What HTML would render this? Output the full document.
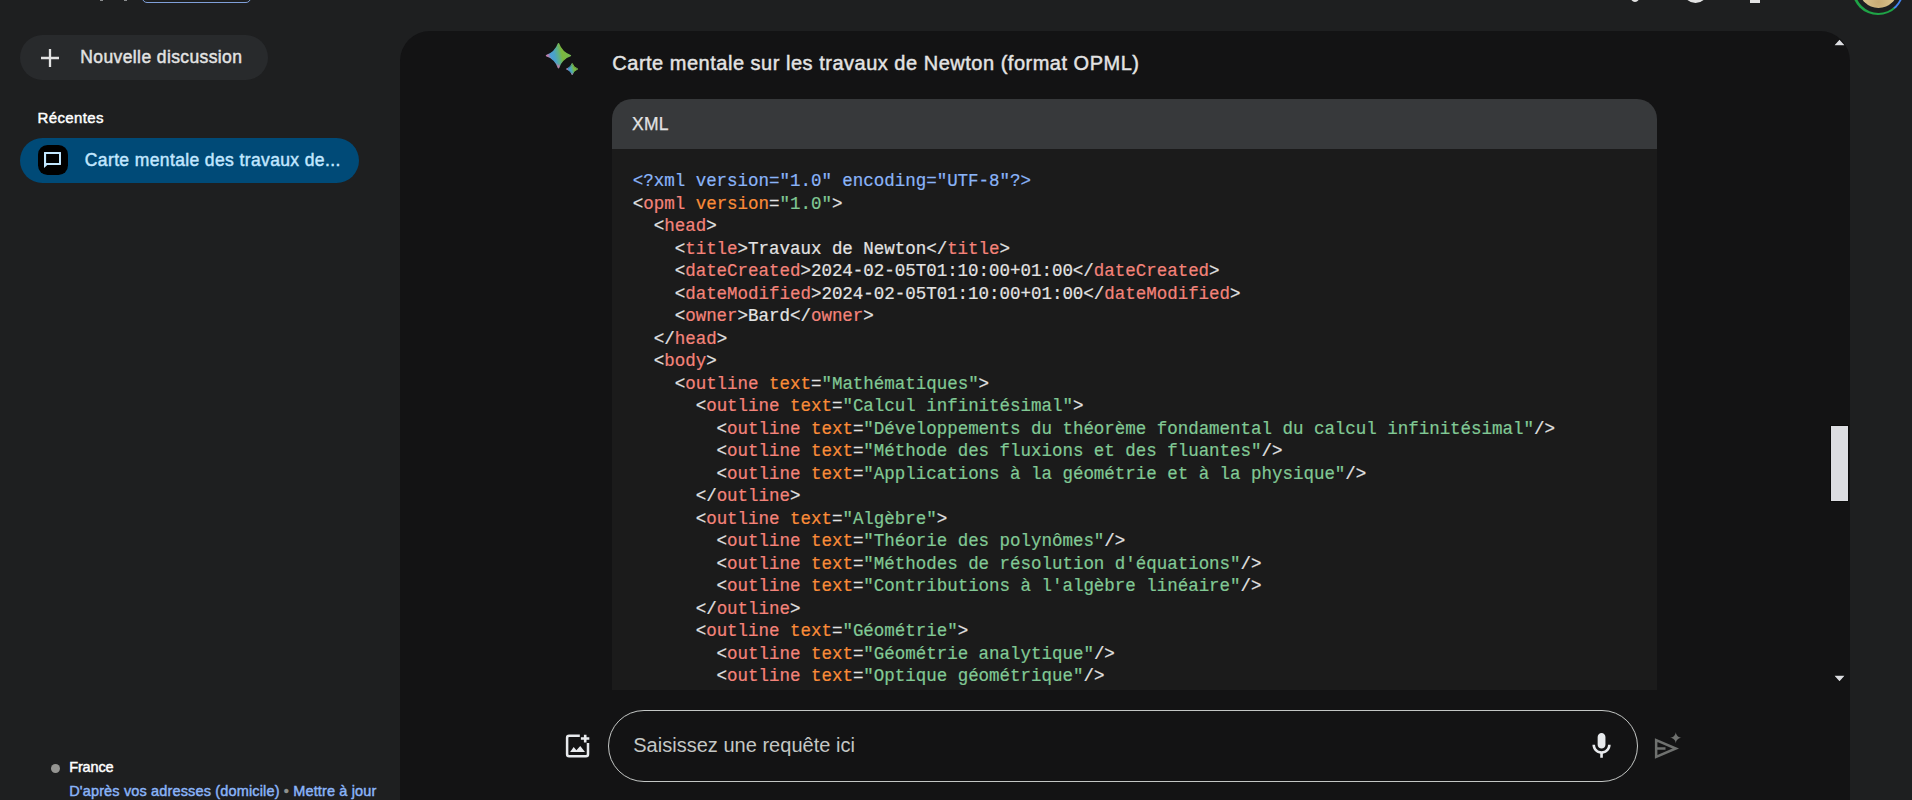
<!DOCTYPE html>
<html lang="fr">
<head>
<meta charset="utf-8">
<title>Bard</title>
<style>
*{box-sizing:border-box;margin:0;padding:0}
html,body{width:1912px;height:800px;overflow:hidden;background:#1e1f20}
body{position:relative;font-family:"Liberation Sans",sans-serif;color:#e3e3e3;-webkit-font-smoothing:antialiased}
.abs{position:absolute}
.t{position:absolute;white-space:nowrap;line-height:1}
/* top strip remnants */
#modebox{left:142px;top:-30px;width:108.8px;height:32.7px;border:1.6px solid #7f9fd8;border-radius:5px}
/* sidebar */
#newchat{left:20px;top:35px;width:248px;height:45px;border-radius:22.5px;background:#282a2c}
#sel{left:20px;top:138px;width:339px;height:45px;border-radius:22.5px;background:#004a77}
#selicon{left:38px;top:145px;width:29.8px;height:29.8px;border-radius:9.5px;background:#000}
/* main panel */
#panel{left:400px;top:31px;width:1450px;height:800px;border-radius:30px 30px 0 0;background:#131314}
#codehead{left:612px;top:98.8px;width:1045px;height:50.2px;border-radius:20px 20px 0 0;background:#37393b}
#codebody{left:612px;top:149px;width:1045px;height:540.6px;background:#1b1b1b}
pre{position:absolute;left:632.8px;top:170.1px;font-family:"Liberation Mono",monospace;font-size:17.5px;letter-spacing:-0.024px;line-height:22.5px;color:#e3e3e3;white-space:pre;-webkit-text-stroke:0.2px currentColor}
.m{color:#8ab4f8}.n{color:#f4837a}.a{color:#fa8c38}.s{color:#81c995}
#input{left:607.6px;top:709.8px;width:1030.8px;height:72.2px;border-radius:36.1px;border:1.25px solid #c4c7c5}
#sbthumb{left:1831px;top:426px;width:17px;height:75px;background:#dcdde1;box-shadow:0 0 0 1px #0b0b0b}
.md{-webkit-text-stroke:0.45px currentColor}
</style>
</head>
<body>
<!-- top strip -->
<div class="abs" id="modebox"></div>
<div class="abs" style="left:100px;top:-1px;width:3px;height:2px;background:#8a8c8e"></div>
<div class="abs" style="left:124px;top:-1px;width:3px;height:2px;background:#8a8c8e"></div>

<!-- sidebar -->
<div class="abs" id="newchat"></div>
<svg class="abs" style="left:40px;top:48px" width="20" height="20" viewBox="0 0 20 20"><path d="M10 1v18M1 10h18" stroke="#e3e3e3" stroke-width="2.3" fill="none"/></svg>
<div class="t md" id="t_new" style="left:80.3px;top:48.6px;font-size:17.5px;letter-spacing:0.39px;color:#e3e3e3">Nouvelle discussion</div>
<div class="t md" id="t_rec" style="left:37.6px;top:109.9px;font-size:15px;letter-spacing:0.36px;color:#fff">Récentes</div>
<div class="abs" id="sel"></div>
<div class="abs" id="selicon"></div>
<svg class="abs" style="left:40px;top:148px" width="26" height="24" viewBox="40 148 26 24"><path fill="#c2e7ff" fill-rule="evenodd" d="M44.400 151.900H60.600Q61 151.900 61 152.300V164.600Q61 165 60.600 165H47.300L44 168.100V152.300Q44 151.900 44.400 151.900ZM46.100 154V163H59V154Z"/></svg>
<div class="t md" id="t_sel" style="left:84.8px;top:152.2px;font-size:17.5px;letter-spacing:0.378px;color:#c2e7ff">Carte mentale des travaux de...</div>
<div class="abs" style="left:50.9px;top:763.7px;width:9.5px;height:9.5px;border-radius:50%;background:#959592"></div>
<div class="t md" id="t_fr" style="left:69.2px;top:759.6px;font-size:14.5px;letter-spacing:-0.15px;color:#fff">France</div>
<div class="t md" id="t_loc" style="left:69.2px;top:783.5px;font-size:14.5px;letter-spacing:0.148px;color:#8ab4f8">D'après vos adresses (domicile) <span style="color:#8e918f">•</span> Mettre à jour</div>

<!-- main panel -->
<div class="abs" id="panel"></div>
<div class="t md" id="t_title" style="left:612.3px;top:53.4px;font-size:20px;letter-spacing:0.51px;color:#e3e3e3">Carte mentale sur les travaux de Newton (format OPML)</div>
<div class="abs" id="codehead"></div>
<div class="t" id="t_xml" style="left:632px;top:116.1px;font-size:17.5px;letter-spacing:0.3px;color:#e3e3e3;-webkit-text-stroke:0.25px currentColor">XML</div>
<div class="abs" id="codebody"></div>
<pre id="code"><span class="m">&lt;?xml version="1.0" encoding="UTF-8"?&gt;</span>
&lt;<span class="n">opml</span> <span class="a">version</span>=<span class="s">"1.0"</span>&gt;
  &lt;<span class="n">head</span>&gt;
    &lt;<span class="n">title</span>&gt;Travaux de Newton&lt;/<span class="n">title</span>&gt;
    &lt;<span class="n">dateCreated</span>&gt;2024-02-05T01:10:00+01:00&lt;/<span class="n">dateCreated</span>&gt;
    &lt;<span class="n">dateModified</span>&gt;2024-02-05T01:10:00+01:00&lt;/<span class="n">dateModified</span>&gt;
    &lt;<span class="n">owner</span>&gt;Bard&lt;/<span class="n">owner</span>&gt;
  &lt;/<span class="n">head</span>&gt;
  &lt;<span class="n">body</span>&gt;
    &lt;<span class="n">outline</span> <span class="a">text</span>=<span class="s">"Mathématiques"</span>&gt;
      &lt;<span class="n">outline</span> <span class="a">text</span>=<span class="s">"Calcul infinitésimal"</span>&gt;
        &lt;<span class="n">outline</span> <span class="a">text</span>=<span class="s">"Développements du théorème fondamental du calcul infinitésimal"</span>/&gt;
        &lt;<span class="n">outline</span> <span class="a">text</span>=<span class="s">"Méthode des fluxions et des fluantes"</span>/&gt;
        &lt;<span class="n">outline</span> <span class="a">text</span>=<span class="s">"Applications à la géométrie et à la physique"</span>/&gt;
      &lt;/<span class="n">outline</span>&gt;
      &lt;<span class="n">outline</span> <span class="a">text</span>=<span class="s">"Algèbre"</span>&gt;
        &lt;<span class="n">outline</span> <span class="a">text</span>=<span class="s">"Théorie des polynômes"</span>/&gt;
        &lt;<span class="n">outline</span> <span class="a">text</span>=<span class="s">"Méthodes de résolution d'équations"</span>/&gt;
        &lt;<span class="n">outline</span> <span class="a">text</span>=<span class="s">"Contributions à l'algèbre linéaire"</span>/&gt;
      &lt;/<span class="n">outline</span>&gt;
      &lt;<span class="n">outline</span> <span class="a">text</span>=<span class="s">"Géométrie"</span>&gt;
        &lt;<span class="n">outline</span> <span class="a">text</span>=<span class="s">"Géométrie analytique"</span>/&gt;
        &lt;<span class="n">outline</span> <span class="a">text</span>=<span class="s">"Optique géométrique"</span>/&gt;</pre>

<!-- input -->
<div class="abs" id="input"></div>
<div class="t" id="t_ph" style="left:633.2px;top:735px;font-size:20px;letter-spacing:0.02px;color:#c4c7c5">Saisissez une requête ici</div>


<!-- sparkle -->
<svg class="abs" style="left:540px;top:38px" width="44" height="44" viewBox="540 38 44 44">
<defs><linearGradient id="g1" gradientUnits="userSpaceOnUse" x1="546.81" y1="58.32" x2="570.19" y2="52.88"><stop offset="0.05" stop-color="#7f92cc"/><stop offset="0.18" stop-color="#4a9ed6"/><stop offset="0.34" stop-color="#4aa2c8"/><stop offset="0.5" stop-color="#5cb08c"/><stop offset="0.66" stop-color="#7cb83c"/><stop offset="1" stop-color="#74b652"/></linearGradient><radialGradient id="p1" gradientUnits="userSpaceOnUse" cx="563" cy="51" r="19.5"><stop offset="0.68" stop-color="#e0709a" stop-opacity="0"/><stop offset="0.95" stop-color="#e0709a" stop-opacity="1"/></radialGradient><linearGradient id="g2" gradientUnits="userSpaceOnUse" x1="566.55" y1="70.32" x2="577.85" y2="67.68"><stop offset="0.05" stop-color="#7f92cc"/><stop offset="0.18" stop-color="#4a9ed6"/><stop offset="0.34" stop-color="#4aa2c8"/><stop offset="0.5" stop-color="#5cb08c"/><stop offset="0.66" stop-color="#7cb83c"/><stop offset="1" stop-color="#74b652"/></linearGradient><radialGradient id="p2" gradientUnits="userSpaceOnUse" cx="574.3" cy="66.8" r="9.4"><stop offset="0.68" stop-color="#e0709a" stop-opacity="0"/><stop offset="0.95" stop-color="#e0709a" stop-opacity="1"/></radialGradient></defs>
<path fill="url(#g1)" stroke="url(#g1)" stroke-width="1.5" stroke-linejoin="round" d="M558.50 43.70Q561.71 52.39 570.40 55.60Q561.71 58.81 558.50 67.50Q555.29 58.81 546.60 55.60Q555.29 52.39 558.50 43.70Z"/><path fill="url(#p1)" stroke="url(#p1)" stroke-width="1.5" stroke-linejoin="round" d="M558.50 43.70Q561.71 52.39 570.40 55.60Q561.71 58.81 558.50 67.50Q555.29 58.81 546.60 55.60Q555.29 52.39 558.50 43.70Z"/>
<path fill="url(#g2)" stroke="url(#g2)" stroke-width="0.9" stroke-linejoin="round" d="M572.20 63.40Q573.71 67.49 577.80 69.00Q573.71 70.51 572.20 74.60Q570.69 70.51 566.60 69.00Q570.69 67.49 572.20 63.40Z"/><path fill="url(#p2)" stroke="url(#p2)" stroke-width="0.9" stroke-linejoin="round" d="M572.20 63.40Q573.71 67.49 577.80 69.00Q573.71 70.51 572.20 74.60Q570.69 70.51 566.60 69.00Q570.69 67.49 572.20 63.40Z"/>
</svg>

<!-- add photo icon -->
<svg class="abs" style="left:560px;top:728px" width="36" height="36" viewBox="560 728 36 36">
<path fill="none" stroke="#e8eaed" stroke-width="2.500" d="M579.800 735.750H569.100Q567.100 735.750 567.100 737.750V754.250Q567.100 756.250 569.100 756.250H586Q588 756.250 588 754.250V743.100"/>
<path fill="none" stroke="#e8eaed" stroke-width="2.600" d="M585.200 734.700V742.400M580.900 738.500H589.300"/>
<path fill="#e8eaed" d="M570.100 752.100L573.700 747.100L576.400 750.300L580.250 746L585 752.100Z"/>
</svg>

<!-- mic -->
<svg class="abs" style="left:1592.1px;top:732.9px" width="19.1" height="24.7" viewBox="5 2 14 19"><path fill="#e8eaed" d="M12 14c1.660 0 3-1.340 3-3V5c0-1.660-1.340-3-3-3S9 3.340 9 5v6c0 1.660 1.340 3 3 3zM17 11c0 2.760-2.240 5-5 5s-5-2.240-5-5H5c0 3.530 2.610 6.430 6 6.920V21h2v-3.080c3.390-.49 6-3.390 6-6.920h-2z"/></svg>

<!-- send + spark -->
<svg class="abs" style="left:1650px;top:728px" width="36" height="36" viewBox="1650 728 36 36">
<path fill="none" stroke="#6f716f" stroke-width="2.500" stroke-linejoin="miter" d="M1656.150 740.200L1675.800 748.500L1656.150 756.800ZM1656.150 748.500H1665.500"/>
<path fill="#6f716f" stroke="#131314" stroke-width="2.4" paint-order="stroke" d="M1675.80 731.80C1675.80 735.06 1678.44 737.70 1681.70 737.70C1678.44 737.70 1675.80 740.34 1675.80 743.60C1675.80 740.34 1673.16 737.70 1669.90 737.70C1673.16 737.70 1675.80 735.06 1675.80 731.80Z"/>
</svg>

<!-- scrollbar arrows -->
<svg class="abs" style="left:1830px;top:36px" width="20" height="14" viewBox="1830 36 20 14"><path d="M1839.500 39.800L1844.500 45.300H1834.500Z" fill="#dcdde1" stroke="#0b0b0b" stroke-width="1.2" paint-order="stroke" stroke-linejoin="round"/></svg>
<svg class="abs" style="left:1830px;top:671px" width="20" height="14" viewBox="1830 671 20 14"><path d="M1834.500 675.800H1844.500L1839.500 681.300Z" fill="#dcdde1" stroke="#0b0b0b" stroke-width="1.2" paint-order="stroke" stroke-linejoin="round"/></svg>

<!-- top-right remnants -->
<div class="abs" style="left:1629px;top:-18px;width:12px;height:19.500px;border-radius:50%;border:2.5px solid #e3e3e3"></div>
<div class="abs" style="left:1683px;top:-22px;width:25px;height:25px;border-radius:50%;border:3px solid #e3e3e3"></div>
<div class="abs" style="left:1749.500px;top:-6px;width:10px;height:8.500px;background:#e3e3e3"></div>
<div class="abs" style="left:1852.0px;top:-37.4px;width:52.4px;height:52.4px;border-radius:50%;background:conic-gradient(from 0deg,#4285f4 0deg,#4285f4 138deg,#1ea446 142deg,#1ea446 243deg,#fbbc04 247deg,#fbbc04 290deg,#ea4335 290deg,#ea4335 360deg)"></div>
<div class="abs" style="left:1854.5px;top:-34.9px;width:47.4px;height:47.4px;border-radius:50%;background:#1e1f20"></div>
<div class="abs" style="left:1858.8px;top:-30.6px;width:38.8px;height:38.8px;border-radius:50%;background:radial-gradient(circle at 50% 85%,#c9ab74 0,#dcc590 45%,#e6d6ad 100%)"></div>

<!-- scrollbar -->
<div class="abs" id="sbthumb"></div>
</body>
</html>
